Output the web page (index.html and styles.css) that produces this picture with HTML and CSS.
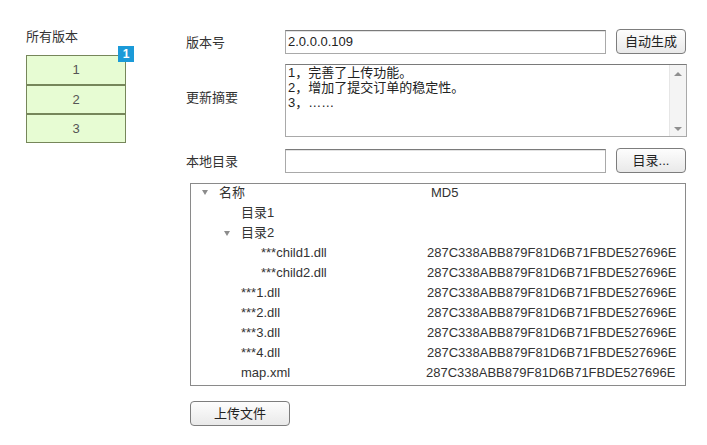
FILE: index.html
```html
<!DOCTYPE html>
<html lang="zh">
<head>
<meta charset="utf-8">
<link rel="stylesheet" href="styles.css">
</head>
<body>
<div class="page">
  <aside class="sidebar">
    <div class="side-title">所有版本</div>
    <div class="versions">
      <div class="ver">1</div>
      <div class="ver">2</div>
      <div class="ver">3</div>
      <span class="badge">1</span>
    </div>
  </aside>
  <main class="main">
    <div class="row row-1">
      <label class="lbl">版本号</label>
      <div class="input">2.0.0.0.109</div>
      <button class="btn btn-side">自动生成</button>
    </div>
    <div class="row row-2">
      <label class="lbl lbl-summary">更新摘要</label>
      <div class="textarea">
        <div class="ta-text">
          <div>1，完善了上传功能。</div>
          <div>2，增加了提交订单的稳定性。</div>
          <div>3，……</div>
        </div>
        <div class="scroll">
          <span class="arr up"></span>
          <span class="arr down"></span>
        </div>
      </div>
    </div>
    <div class="row row-3">
      <label class="lbl">本地目录</label>
      <div class="input"></div>
      <button class="btn btn-side">目录...</button>
    </div>
    <div class="tree">
      <div class="tr lv0 head-row"><span class="name"><span class="tog"></span>名称</span><span class="md5 head">MD5</span></div>
      <div class="tr lv1"><span class="name"><span class="tog none"></span>目录1</span><span class="md5"></span></div>
      <div class="tr lv1"><span class="name"><span class="tog"></span>目录2</span><span class="md5"></span></div>
      <div class="tr lv2"><span class="name"><span class="tog none"></span>***child1.dll</span><span class="md5">287C338ABB879F81D6B71FBDE527696E</span></div>
      <div class="tr lv2"><span class="name"><span class="tog none"></span>***child2.dll</span><span class="md5">287C338ABB879F81D6B71FBDE527696E</span></div>
      <div class="tr lv1"><span class="name"><span class="tog none"></span>***1.dll</span><span class="md5">287C338ABB879F81D6B71FBDE527696E</span></div>
      <div class="tr lv1"><span class="name"><span class="tog none"></span>***2.dll</span><span class="md5">287C338ABB879F81D6B71FBDE527696E</span></div>
      <div class="tr lv1"><span class="name"><span class="tog none"></span>***3.dll</span><span class="md5">287C338ABB879F81D6B71FBDE527696E</span></div>
      <div class="tr lv1"><span class="name"><span class="tog none"></span>***4.dll</span><span class="md5">287C338ABB879F81D6B71FBDE527696E</span></div>
      <div class="tr lv1"><span class="name"><span class="tog none"></span>map.xml</span><span class="md5 shift">287C338ABB879F81D6B71FBDE527696E</span></div>
    </div>
    <div class="actions">
      <button class="btn btn-upload">上传文件</button>
    </div>
  </main>
</div>
</body>
</html>
```

FILE: styles.css
```css
* { box-sizing: border-box; }
html, body { margin: 0; padding: 0; background: #fff; }
body {
  font-family: "Liberation Sans", Arial, "Noto Sans CJK SC", sans-serif;
  font-size: 13px;
  color: #333;
  width: 707px;
  height: 445px;
  overflow: hidden;
}
.page {
  display: flex;
  align-items: flex-start;
}
.sidebar {
  margin-left: 26px;
  padding-top: 29px;
  width: 100px;
}
.side-title {
  line-height: 16px;
  height: 16px;
}
.versions {
  position: relative;
  margin-top: 10px;
  border: 1px solid #76865a;
  background: #e7fcd3;
}
.ver {
  height: 29px;
  line-height: 29px;
  text-align: center;
  color: #555;
}
.ver + .ver { border-top: 2px solid #76865a; height: 29px; line-height: 27px; }
.versions .ver:first-child { height: 28px; line-height: 28px; }
.badge {
  position: absolute;
  right: -9px;
  top: -10px;
  width: 16px;
  height: 16px;
  background: #1b9ad8;
  color: #fff;
  font-weight: bold;
  font-size: 12px;
  line-height: 16px;
  text-align: center;
}
.main {
  margin-left: 60px;
  padding-top: 29px;
  width: 502px;
}
.row {
  display: flex;
  align-items: center;
}
.lbl {
  width: 99px;
  flex: none;
}
.lbl-summary { padding-bottom: 8px; }
.input {
  width: 321px;
  height: 24px;
  border: 1px solid #a9a9a9;
  border-top-color: #7a7a7a;
  box-shadow: inset 0 1px 0 #e2e2e2;
  padding: 0 2px;
  line-height: 22px;
  color: #222;
}
.btn {
  font-family: "Liberation Sans", Arial, "Noto Sans CJK SC", sans-serif;
  font-size: 13px;
  color: #222;
  background: linear-gradient(#fdfdfd, #e9e9e9);
  border: 1px solid #7d7d7d;
  border-radius: 4px;
  padding: 0;
  height: 25px;
  line-height: 23px;
}
.btn-side {
  width: 70px;
  margin-left: 10px;
}
.row-2 { margin-top: 10px; }
.textarea {
  width: 402px;
  height: 73px;
  border: 1px solid #a9a9a9;
  border-top-color: #7a7a7a;
  display: flex;
}
.ta-text {
  flex: 1;
  padding: 0 2px;
  line-height: 15px;
  color: #222;
}
.scroll {
  width: 17px;
  background: #f4f4f4;
  border-left: 1px solid #e6e6e6;
  display: flex;
  flex-direction: column;
  justify-content: space-between;
  align-items: center;
  padding: 7px 0 5px;
}
.arr {
  width: 0;
  height: 0;
  border-left: 4px solid transparent;
  border-right: 4px solid transparent;
}
.arr.up { border-bottom: 4px solid #8f8f8f; }
.arr.down { border-top: 4px solid #8f8f8f; }
.row-3 { margin-top: 11px; }
.tree {
  margin-top: 10px;
  margin-left: 4px;
  width: 496px;
  height: 203px;
  border: 1px solid #8a8a8a;
}
.tr {
  display: flex;
  height: 20px;
  line-height: 20px;
  align-items: center;
}
.tr.head-row { height: 19px; line-height: 15px; align-items: flex-start; padding-top: 1px; }
.head-row .name { align-items: center; height: 15px; }
.name {
  width: 236px;
  flex: none;
  display: flex;
  align-items: center;
}
.lv0 .name { padding-left: 11px; }
.lv1 .name { padding-left: 33px; }
.lv2 .name { padding-left: 53px; }
.tog {
  width: 0;
  height: 0;
  border-left: 3.5px solid transparent;
  border-right: 3.5px solid transparent;
  border-top: 5px solid #8c8c8c;
  margin-right: 11px;
  flex: none;
}
.tog.none { border-color: transparent; }
.md5 { padding-left: 0; }
.md5.head { padding-left: 4px; }
.md5.shift { margin-left: -1px; }
.actions {
  margin-top: 15px;
  margin-left: 4px;
}
.btn-upload {
  width: 100px;
}
```
